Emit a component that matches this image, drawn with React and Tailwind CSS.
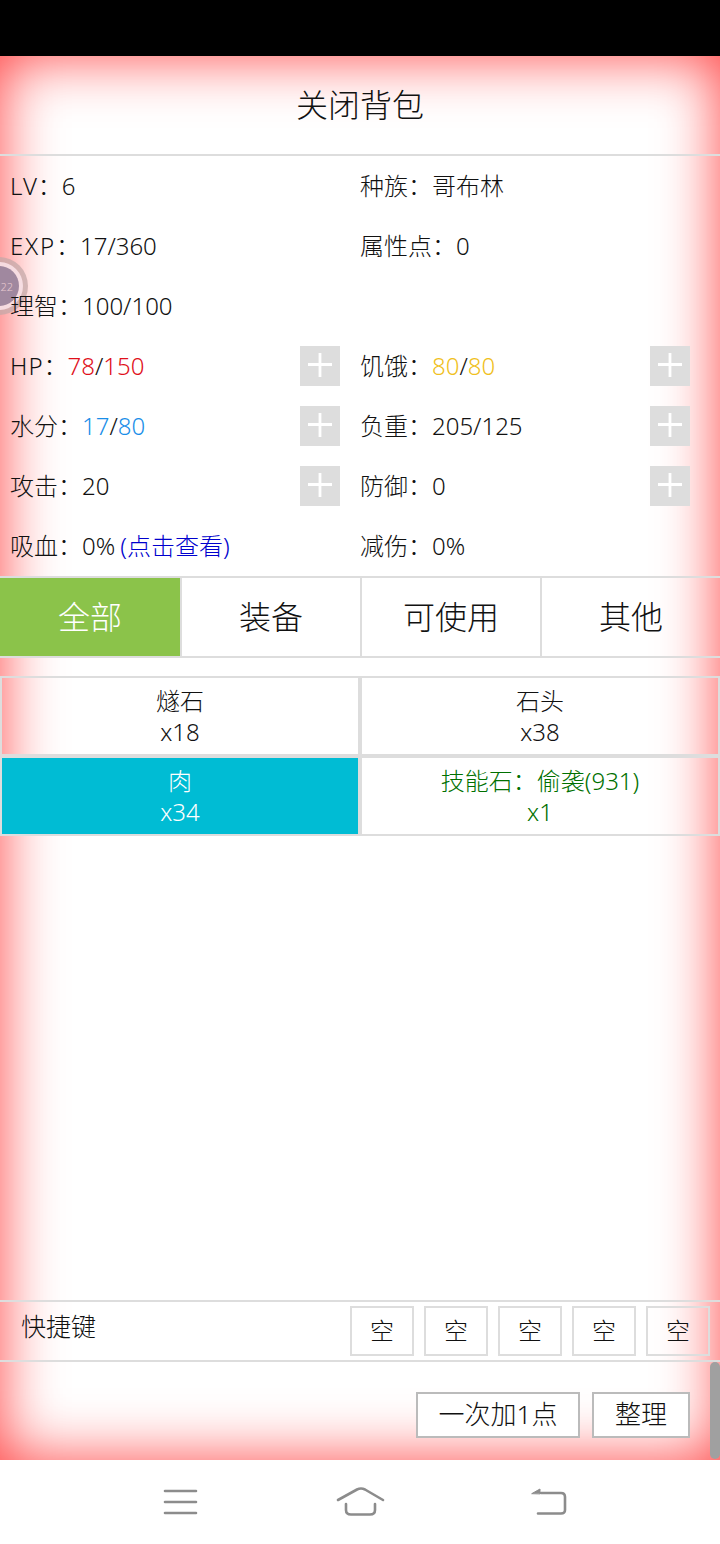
import React from "react"

const font = { fontFamily: '"Noto Sans", "Noto Sans CJK SC", sans-serif' }

function PlusBtn() {
  return (
    <button className="w-10 h-10 bg-[#dddddd] flex items-center justify-center shrink-0">
      <svg width="40" height="40" viewBox="0 0 40 40" fill="none" stroke="#ffffff" strokeWidth="2.8">
        <path d="M8 18.5H32M20 7V31" />
      </svg>
    </button>
  )
}

function Stat({ children, plus }) {
  return (
    <div className="h-[60px] pl-2.5 pr-2.5 flex items-center justify-between">
      <span className="whitespace-nowrap">{children}</span>
      {plus && <PlusBtn />}
    </div>
  )
}

function Item({ name, count, selected, color }) {
  return (
    <div
      className={`h-20 border-2 border-[#dddddd] flex flex-col items-center justify-center leading-[30px] ${
        selected ? "bg-[#00bcd4] text-white" : color || ""
      }`}
    >
      <span>{name}</span>
      <span className="mt-px">{count}</span>
    </div>
  )
}

export default function App() {
  const tabs = ["装备", "可使用", "其他"]

  return (
    <div style={font} className="relative w-[720px] h-[1544px] bg-white text-[#111111] text-2xl font-light overflow-hidden">
      <div className="h-14 bg-black" />

      <div className="relative h-[1404px] flex flex-col shadow-[inset_0_0_60px_#ff4040]">
        {/* floating ball, sits over the glow but under the stat text */}
        <div className="absolute left-[-30px] top-[201px] w-[58px] h-[58px] rounded-full bg-[#c4a8a8]/75 flex items-center justify-center">
          <div className="w-12 h-12 rounded-full bg-[#fbe4ea]/85 flex items-center justify-center">
            <div className="w-10 h-10 rounded-full bg-[#a0889f] flex items-center justify-end pr-[6px] text-[11px] leading-none text-[#e8c8d0]">
              22
            </div>
          </div>
        </div>

        <div className="h-[100px] flex items-center justify-center text-[32px] border-b-2 border-[#dddddd] shrink-0">
          关闭背包
        </div>

        <div className="relative grid grid-cols-2 w-[700px]">
          <Stat><span className="tracking-[1px]">LV</span>：6</Stat>
          <Stat>种族：哥布林</Stat>
          <Stat><span className="tracking-[1.8px]">EXP</span>：17/360</Stat>
          <Stat>属性点：0</Stat>
          <Stat>理智：100/100</Stat>
          <Stat />
          <Stat plus>
            <span className="tracking-[1px]">HP</span>：<span className="text-[#e0101a]">78</span>/<span className="text-[#e0101a]">150</span>
          </Stat>
          <Stat plus>
            饥饿：<span className="text-[#f0c020]">80</span>/<span className="text-[#f0c020]">80</span>
          </Stat>
          <Stat plus>
            水分：<span className="text-[#1a8ee8]">17</span>/<span className="text-[#1a8ee8]">80</span>
          </Stat>
          <Stat plus>负重：205/125</Stat>
          <Stat plus>攻击：20</Stat>
          <Stat plus>防御：0</Stat>
          <Stat>
            吸血：0<span className="tracking-[3px]">%</span><span className="ml-0.5 text-[#0000cd]">(点击查看)</span>
          </Stat>
          <Stat>减伤：0<span className="tracking-[3px]">%</span></Stat>
        </div>

        <div className="h-[82px] flex border-y-2 border-[#dddddd] text-[32px] shrink-0">
          <div className="w-[180px] bg-[#8bc34a] text-white flex items-center justify-center">全部</div>
          {tabs.map((tab) => (
            <div key={tab} className="w-[180px] border-l-2 border-[#dddddd] flex items-center justify-center">
              {tab}
            </div>
          ))}
        </div>

        <div className="grid grid-cols-2 mt-[18px]">
          <Item name="燧石" count="x18" />
          <Item name="石头" count="x38" />
          <Item name="肉" count="x34" selected />
          <Item name="技能石：偷袭(931)" count="x1" color="text-[#007000]" />
        </div>

        <div className="mt-auto h-[62px] border-y-2 border-[#dddddd] flex items-start justify-between pl-[21px] pr-2.5 shrink-0">
          <span className="mt-2 text-[25px]">快捷键</span>
          <div className="flex gap-2.5 mt-1">
            {[0, 1, 2, 3, 4].map((i) => (
              <div key={i} className="w-16 h-[50px] border-2 border-[#dddddd] flex items-center justify-center">
                空
              </div>
            ))}
          </div>
        </div>

        <div className="h-[98px] flex justify-end gap-3 pt-[30px] pr-[30px] text-[26px] shrink-0">
          <button className="w-[164px] h-[46px] pb-0.5 bg-white border-2 border-[#bbbbbb] flex items-center justify-center">
            一次加1点
          </button>
          <button className="w-[98px] h-[46px] pb-0.5 bg-white border-2 border-[#bbbbbb] flex items-center justify-center">
            整理
          </button>
        </div>
      </div>

      <div className="h-[84px]">
        <svg width="720" height="84" viewBox="0 0 720 84" fill="none" stroke="#8c8c8c" strokeWidth="2.6" strokeLinecap="round" strokeLinejoin="round">
          <path d="M165 31H196M165 42H196M165 53H196" />
          <path d="M338 40L357 29.5Q361 27.5 365 29.5L383 40" />
          <path d="M346 44V50Q346 54.5 351 54.5H370Q375 54.5 375 50V44" />
          <path d="M541 33H561Q565 33 565 37V50Q565 53.5 561 53.5H538" />
          <path d="M532 33.5L540 29V33.5Z" fill="#8c8c8c" stroke="#8c8c8c" strokeWidth="1" />
        </svg>
      </div>

      {/* scrollbar */}
      <div className="absolute right-0 top-[1362px] w-2.5 h-[97px] rounded-[5px] bg-[#a0a0a0]" />
    </div>
  )
}
